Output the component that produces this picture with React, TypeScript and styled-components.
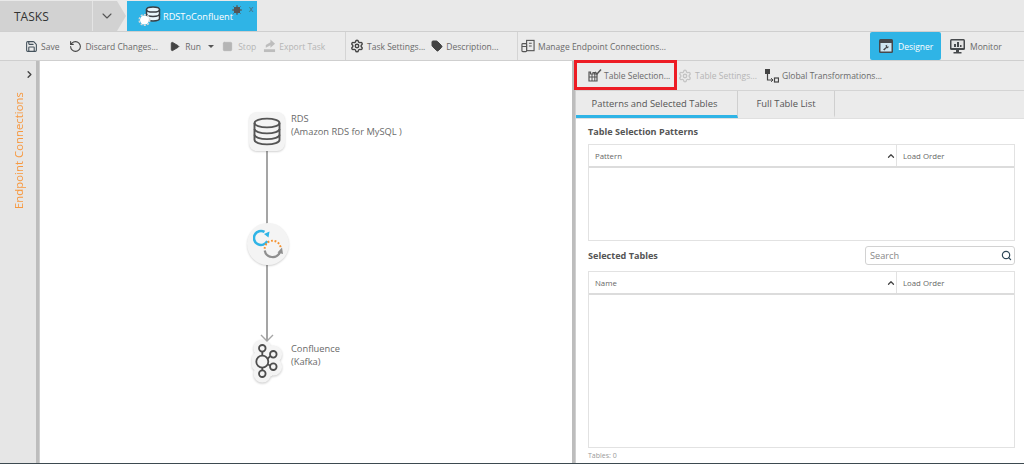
import React from 'react';
import styled, { createGlobalStyle } from 'styled-components';
import { ChevronDown, ChevronRight, ChevronUp, Play, Search, Square, Tag, Settings, Save, RotateCcw } from 'lucide-react';

const Global = createGlobalStyle`
  html, body { margin: 0; padding: 0; background: #fff; overflow: hidden; }
  body { font-family: "Open Sans", "Noto Sans", sans-serif; color: #555; }
  * { box-sizing: border-box; }
`;

const Page = styled.div`
  width: 1024px;
  height: 464px;
  display: flex;
  flex-direction: column;
  border-bottom: 1px solid #3d4a50;
  background: #fff;
`;

const TabBar = styled.div`
  height: 31px;
  padding-top: 1px;
  display: flex;
  background: #e9e9e9;
  flex: none;
`;

const TasksLabel = styled.div`
  width: 93px;
  padding-left: 14px;
  display: flex;
  align-items: center;
  background: #d2d2d2;
  color: #333;
  font-size: 12px;
  border-right: 1px solid #e4e4e4;
`;

const Dropdown = styled.div`
  position: relative;
  width: 34px;
  display: flex;
  align-items: center;
  padding-left: 6px;
  background: #d2d2d2;
  color: #555;
  clip-path: polygon(0 0, 24px 0, 33px 50%, 24px 100%, 0 100%);
`;

const ActiveTab = styled.div`
  position: relative;
  width: 130px;
  display: flex;
  align-items: center;
  gap: 1px;
  padding-left: 11px;
  background: #2fb4e6;
  color: #fff;
  font-size: 9.2px;
`;

const Dirty = styled.svg`
  position: absolute;
  left: 105px;
  top: 4px;
`;

const CloseX = styled.span`
  position: absolute;
  left: 122px;
  top: 2px;
  color: #4d6d80;
  font-size: 9px;
  line-height: 12px;
`;

const Toolbar = styled.div`
  height: 30px;
  flex: none;
  display: flex;
  align-items: stretch;
  background: #ebebeb;
  border-top: 1px solid #cfcfcf;
  border-bottom: 1px solid #cfcfcf;
  font-size: 8.5px;
`;

const ToolGroup = styled.div<{ $width: number; $pad: number; $plain?: boolean }>`
  width: ${p => p.$width}px;
  flex: none;
  display: flex;
  align-items: center;
  padding-left: ${p => p.$pad}px;
  border-right: ${p => (p.$plain ? '0' : '1px solid #d4d4d4')};
`;

const Tool = styled.div<{ $off?: boolean; $gap?: number }>`
  display: flex;
  align-items: center;
  gap: 3px;
  margin-right: ${p => p.$gap ?? 6}px;
  white-space: nowrap;
  color: ${p => (p.$off ? '#b5b5b5' : '#6a6a6a')};
`;

const Caret = styled.span`
  width: 0;
  height: 0;
  margin-left: 4px;
  border-left: 3px solid transparent;
  border-right: 3px solid transparent;
  border-top: 3px solid #555;
`;

const Spacer = styled.div`
  flex: 1;
`;

const ViewButton = styled.div<{ $active?: boolean }>`
  width: ${p => (p.$active ? 71 : 83)}px;
  display: flex;
  align-items: center;
  gap: 5px;
  padding-left: 9px;
  border-radius: 2px;
  background: ${p => (p.$active ? '#2fb4e6' : 'transparent')};
  color: ${p => (p.$active ? '#fff' : '#6a6a6a')};
`;

const Body = styled.div`
  flex: 1;
  min-height: 0;
  display: flex;
`;

const Sidebar = styled.div`
  width: 36px;
  flex: none;
  display: flex;
  flex-direction: column;
  align-items: center;
  background: #e6e6e6;
`;

const Expand = styled.div`
  align-self: flex-end;
  height: 15px;
  margin: 2px 1px 0 0;
  color: #444;
`;

const VerticalLabel = styled.div`
  margin-top: 14px;
  writing-mode: vertical-rl;
  transform: rotate(180deg);
  color: #f7983f;
  font-size: 11.2px;
  letter-spacing: 0.1px;
  white-space: nowrap;
`;

const Splitter = styled.div`
  width: 4px;
  flex: none;
  background: #bdbdbd;
  border-right: 1px solid #d0d0d0;
`;

const Canvas = styled.div`
  position: relative;
  width: 532px;
  flex: none;
  background: #fff;
`;

const Link = styled.div<{ $top: number; $height: number }>`
  position: absolute;
  left: 226px;
  top: ${p => p.$top}px;
  width: 2px;
  height: ${p => p.$height}px;
  background: #a5a5a5;
`;

const ArrowHead = styled.svg`
  position: absolute;
  left: 220px;
  top: 273px;
`;

const Node = styled.div<{ $top: number; $left: number; $round?: boolean }>`
  position: absolute;
  left: ${p => p.$left}px;
  top: ${p => p.$top}px;
  width: ${p => (p.$round ? 42 : 36)}px;
  height: ${p => (p.$round ? 42 : 39)}px;
  display: flex;
  align-items: center;
  justify-content: center;
  border-radius: ${p => (p.$round ? '50%' : '8px')};
  background: #f4f4f4;
  box-shadow: 0 1px 2px rgba(0, 0, 0, 0.18);
`;

const BlobNode = styled.svg`
  position: absolute;
  left: 212px;
  top: 277px;
  filter: drop-shadow(0 1px 1px rgba(0, 0, 0, 0.22));
`;

const NodeLabel = styled.div<{ $top: number }>`
  position: absolute;
  left: 251px;
  top: ${p => p.$top}px;
  font-size: 9.3px;
  line-height: 13px;
  color: #6a6a6a;
  white-space: nowrap;
`;

const Panel = styled.div`
  flex: 1;
  min-width: 0;
  display: flex;
  flex-direction: column;
`;

const PanelBar = styled.div`
  height: 30px;
  flex: none;
  display: flex;
  align-items: center;
  background: #ebebeb;
  border-bottom: 1px solid #d4d4d4;
  font-size: 8.5px;
`;

const Highlighted = styled.div`
  width: 103px;
  height: 30px;
  flex: none;
  display: flex;
  align-items: center;
  gap: 2px;
  padding-left: 11px;
  margin: -1px 1px 0 -2px;
  border: 3px solid #ed1c24;
  color: #6a6a6a;
  white-space: nowrap;
`;

const Tabs = styled.div`
  height: 28px;
  flex: none;
  display: flex;
  background: #ebebeb;
  border-bottom: 1px solid #e0e0e0;
`;

const PanelTab = styled.div<{ $active?: boolean; $width: number }>`
  width: ${p => p.$width}px;
  display: flex;
  align-items: center;
  justify-content: center;
  font-size: 9.4px;
  color: #555;
  border-right: 1px solid #cfcfcf;
  border-bottom: 3px solid ${p => (p.$active ? '#2fb4e6' : 'transparent')};
  padding-right: ${p => (p.$active ? '4px' : '0')};
`;

const Content = styled.div`
  flex: 1;
  min-height: 0;
  display: flex;
  flex-direction: column;
  padding: 0 9px 0 12px;
`;

const Heading = styled.div`
  height: 25px;
  flex: none;
  display: flex;
  align-items: center;
  font-size: 9.1px;
  font-weight: 700;
  color: #555;
`;

const HeadingRow = styled.div`
  height: 30px;
  flex: none;
  display: flex;
  align-items: center;
  justify-content: space-between;
  padding-bottom: 2px;
`;

const SearchBox = styled.div`
  width: 150px;
  height: 19px;
  display: flex;
  align-items: center;
  justify-content: space-between;
  padding: 0 2px 0 4px;
  border: 1px solid #d2d2d2;
  border-radius: 3px;
  font-size: 9.2px;
  color: #888;
`;

const Table = styled.div<{ $height?: number }>`
  display: flex;
  flex-direction: column;
  flex: ${p => (p.$height ? 'none' : '1')};
  height: ${p => (p.$height ? `${p.$height}px` : 'auto')};
  min-height: 0;
  border: 1px solid #e2e2e2;
`;

const TableHead = styled.div`
  height: 23px;
  flex: none;
  display: flex;
  border-bottom: 2px solid #dcdcdc;
  font-size: 7.8px;
  color: #666;
`;

const NameCol = styled.div`
  flex: 1;
  display: flex;
  align-items: center;
  justify-content: space-between;
  padding: 0 0 0 6px;
  border-right: 1px solid #e2e2e2;
`;

const OrderCol = styled.div`
  width: 117px;
  flex: none;
  display: flex;
  align-items: center;
  padding-left: 6px;
`;

const Footer = styled.div`
  height: 15px;
  flex: none;
  display: flex;
  align-items: center;
  font-size: 7px;
  color: #999;
`;

const DbIcon = () => (
  <svg width="28" height="29" viewBox="0 0 28 29" fill="none" stroke="#555" strokeWidth="1.9">
    <ellipse cx="14" cy="6" rx="12.5" ry="4.4" />
    <path d="M1.5 6v17c0 2.4 5.6 4.4 12.5 4.4s12.5-2 12.5-4.4V6" />
    <path d="M1.5 12c0 2.4 5.6 4.4 12.5 4.4S26.5 14.4 26.5 12M1.5 17.7c0 2.4 5.6 4.4 12.5 4.4s12.5-2 12.5-4.4" />
  </svg>
);

const TabIcon = () => (
  <svg width="24" height="22" viewBox="0 0 24 22">
    <g fill="#e9f7fd" stroke="#3a3f44" strokeWidth="1.5">
      <path d="M8.5 4.5v9c0 1.3 2.9 2.4 6.5 2.4s6.500-1.1 6.5-2.4v-9" />
      <ellipse cx="15" cy="4.5" rx="6.5" ry="2.6" />
      <path d="M8.5 9c0 1.3 2.9 2.4 6.5 2.4s6.5-1.1 6.5-2.4" fill="none" />
    </g>
    <circle cx="6.5" cy="15" r="4.5" fill="#fff" />
    <circle cx="6.5" cy="15" r="5.3" fill="none" stroke="#d8d8d8" strokeWidth="1.5" strokeDasharray="2 1.4" />
  </svg>
);

const TaskIcon = () => (
  <svg width="31" height="30" viewBox="0 0 31 30" fill="none">
    <path d="M11.5 2.9A7 7 0 1 0 14.3 12" stroke="#2fb4e6" strokeWidth="2.5" />
    <path d="M16.5 2.5L15.5 8.5L11 5z" fill="#2fb4e6" />
    <path d="M11.7 19.7A8 8 0 0 1 27.7 19.7" stroke="#f59331" strokeWidth="2" strokeDasharray="1.8 1.8" />
    <path d="M11.7 21.5A8 8 0 0 0 27 23" stroke="#8f8f8f" strokeWidth="2.2" />
    <path d="M24.5 23.5L29 18.5L30 25z" fill="#8f8f8f" />
  </svg>
);

const Star = () => (
  <Dirty width="10" height="10" viewBox="0 0 10 10" fill="#555" stroke="#555" strokeWidth="1">
    <circle cx="5" cy="5" r="3" />
    <path d="M5 0v10M0 5h10M1.5 1.5l7 7M8.5 1.5l-7 7" />
  </Dirty>
);

const TableSelIcon = () => (
  <svg width="14" height="13" viewBox="0 0 14 13">
    <path d="M1 3h1.5v2H5V3.5h1.5V5H9v7H1z" fill="none" stroke="#555" strokeWidth="1.2" />
    <path d="M1 8h8M4 5v7M6.8 5v7" stroke="#555" strokeWidth="1" />
    <path d="M7 3l2 2 4-4.500" fill="none" stroke="#555" strokeWidth="1.5" />
  </svg>
);

const TransformIcon = () => (
  <svg width="14" height="14" viewBox="0 0 14 14" fill="none" stroke="#444">
    <rect x="0.5" y="0.5" width="4" height="4" fill="#444" />
    <rect x="9.5" y="9" width="4" height="4" strokeWidth="1.2" />
    <path d="M2.5 5v6h5" strokeWidth="1.2" />
    <path d="M6 9.2L8 11l-2 1.8" strokeWidth="1" />
  </svg>
);

const ExportIcon = () => (
  <svg width="13" height="14" viewBox="0 0 14 14" fill="#bdbdbd">
    <rect x="1" y="10.5" width="12" height="3" />
    <path d="M3 9V6l5-3V0l5 4.5L8 9V6.2z" />
  </svg>
);

const EndpointIcon = () => (
  <svg width="14" height="14" viewBox="0 0 15 14" fill="none" stroke="#555" strokeWidth="1.2">
    <rect x="6" y="1" width="8" height="11" />
    <rect x="1" y="4.5" width="5" height="8.5" rx="1" fill="#ebebeb" />
    <path d="M8.5 4h3M8.5 7h3M1 7.5h5" />
  </svg>
);

const DesignerIcon = () => (
  <svg width="14" height="14" viewBox="0 0 14 14">
    <rect width="14" height="14" rx="1.5" fill="#46494c" />
    <rect x="1.5" y="4" width="11" height="8.5" fill="#cfe8f3" />
    <path d="M4 10.5l3-2.5-.5-1.8 2-.4-.8 1.2 1 .8 1-.6c0 1.6-1 2.4-2.5 2.1l-1.6 2.2z" fill="#46494c" />
  </svg>
);

const MonitorIcon = () => (
  <svg width="15" height="15" viewBox="0 0 15 15">
    <rect width="15" height="11" rx="1.5" fill="#46494c" />
    <rect x="1.5" y="1.5" width="12" height="7.5" fill="#e3e3e3" />
    <path d="M4 8V5h2v3zM7 8V3h2v5zM10 8V6h1.5v2z" fill="#46494c" />
    <path d="M6 11h3v2h2.5v1.5h-8V13H6z" fill="#46494c" />
  </svg>
);

const kafkaNodes = [
  { cx: 10.3, cy: 23.7, r: 6 },
  { cx: 10.3, cy: 10.3, r: 3.3 },
  { cx: 10.3, cy: 35.7, r: 3.3 },
  { cx: 21.3, cy: 16.3, r: 3.3 },
  { cx: 21.3, cy: 28.7, r: 3.3 },
];

const KafkaNode = () => (
  <BlobNode width="32" height="46" viewBox="0 0 32 46" fill="none">
    <rect x="4" y="8" width="16" height="30" fill="#f4f4f4" />
    {kafkaNodes.map((n, i) => (
      <circle key={i} cx={n.cx} cy={n.cy} r={n.r + 5.5} fill="#f4f4f4" />
    ))}
    <g stroke="#4d4d4d" strokeWidth="1.8">
      <path d="M10.3 13.6v4.1M10.3 29.7v2.700M15.6 20.8l2.800-2.900M15.6 26.5l2.800 1" />
      {kafkaNodes.map((n, i) => (
        <circle key={i} cx={n.cx} cy={n.cy} r={n.r} />
      ))}
    </g>
  </BlobNode>
);

const App: React.FC<{}> = () => {
  return (
    <Page>
      <Global />
      <TabBar>
        <TasksLabel>TASKS</TasksLabel>
        <Dropdown><ChevronDown size={16} strokeWidth={1.6} /></Dropdown>
        <ActiveTab>
          <TabIcon />
          RDSToConfluent
          <Star />
          <CloseX>x</CloseX>
        </ActiveTab>
      </TabBar>

      <Toolbar>
        <ToolGroup $width={346} $pad={25}>
          <Tool $gap={10}><Save size={13} color="#44525c" />Save</Tool>
          <Tool $gap={11}><RotateCcw size={13} color="#444" />Discard Changes...</Tool>
          <Tool $gap={8}><Play size={11} fill="#444" color="#444" />&nbsp;Run<Caret /></Tool>
          <Tool $off $gap={7}><Square size={11} fill="#b5b5b5" color="#b5b5b5" />&nbsp;Stop</Tool>
          <Tool $off><ExportIcon />Export Task</Tool>
        </ToolGroup>
        <ToolGroup $width={172} $pad={4}>
          <Tool $gap={6}><Settings size={14} color="#444" strokeWidth={2.4} />Task Settings...</Tool>
          <Tool><Tag size={12} fill="#444" color="#444" />Description...</Tool>
        </ToolGroup>
        <ToolGroup $width={200} $pad={3} $plain>
          <Tool><EndpointIcon />Manage Endpoint Connections...</Tool>
        </ToolGroup>
        <Spacer />
        <ViewButton $active><DesignerIcon />Designer</ViewButton>
        <ViewButton><MonitorIcon />Monitor</ViewButton>
      </Toolbar>

      <Body>
        <Sidebar>
          <Expand><ChevronRight size={11} strokeWidth={3} /></Expand>
          <VerticalLabel>Endpoint Connections</VerticalLabel>
        </Sidebar>
        <Splitter />
        <Canvas>
          <Link $top={89} $height={85} />
          <Link $top={204} $height={75} />
          <KafkaNode />
          <ArrowHead width="14" height="9" viewBox="0 0 14 9" fill="none" stroke="#a5a5a5" strokeWidth="1.4">
            <path d="M1 1l6 6 6-6" />
          </ArrowHead>
          <Node $left={209} $top={51}><DbIcon /></Node>
          <Node $left={207} $top={162} $round><TaskIcon /></Node>
          <NodeLabel $top={51}>RDS<br />(Amazon RDS for MySQL )</NodeLabel>
          <NodeLabel $top={281}>Confluence<br />(Kafka)</NodeLabel>
        </Canvas>
        <Splitter />
        <Panel>
          <PanelBar>
            <Highlighted><TableSelIcon />Table Selection...</Highlighted>
            <Tool $off $gap={8}><Settings size={14} color="#c4c4c4" strokeWidth={2.2} />Table Settings...</Tool>
            <Tool><TransformIcon />Global Transformations...</Tool>
          </PanelBar>
          <Tabs>
            <PanelTab $active $width={162}>Patterns and Selected Tables</PanelTab>
            <PanelTab $width={97}>Full Table List</PanelTab>
          </Tabs>
          <Content>
            <Heading>Table Selection Patterns</Heading>
            <Table $height={97}>
              <TableHead>
                <NameCol>Pattern<ChevronUp size={10} strokeWidth={3} color="#444" /></NameCol>
                <OrderCol>Load Order</OrderCol>
              </TableHead>
            </Table>
            <HeadingRow>
              <Heading>Selected Tables</Heading>
              <SearchBox>Search<Search size={11} strokeWidth={2.6} color="#2f4858" /></SearchBox>
            </HeadingRow>
            <Table>
              <TableHead>
                <NameCol>Name<ChevronUp size={10} strokeWidth={3} color="#444" /></NameCol>
                <OrderCol>Load Order</OrderCol>
              </TableHead>
            </Table>
            <Footer>Tables: 0</Footer>
          </Content>
        </Panel>
      </Body>
    </Page>
  );
};

export default App;
